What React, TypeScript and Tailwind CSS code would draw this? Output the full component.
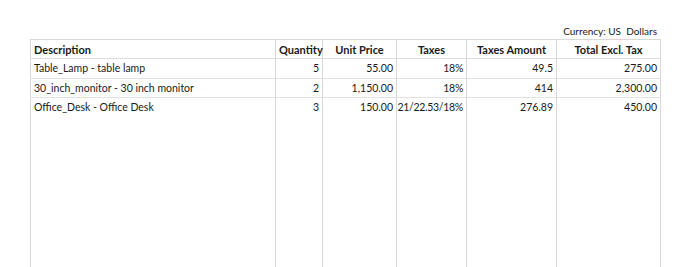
const rows = [
  { desc: "Table_Lamp - table lamp", qty: "5", price: "55.00", taxes: "18%", amount: "49.5", total: "275.00" },
  { desc: "30_inch_monitor - 30 inch monitor", qty: "2", price: "1,150.00", taxes: "18%", amount: "414", total: "2,300.00" },
  { desc: "Office_Desk - Office Desk", qty: "3", price: "150.00", taxes: "21/22.53/18%", amount: "276.89", total: "450.00" },
];

const App = () => {
  return (
    <div className="h-[267px] overflow-hidden bg-white pl-[30px] pt-[24px] text-[10.5px] text-[#1a1a1a] font-['Lato',sans-serif] whitespace-nowrap">
      <div className="w-[630px]">
        <div className="h-[15px] pr-[3px] text-right leading-[15px] text-[10px]">Currency: US&nbsp; Dollars</div>
        <table className="w-[630px] table-fixed border-collapse border border-[#d8d8d8]">
          <colgroup>
            <col className="w-[245px]" />
            <col className="w-[47px]" />
            <col className="w-[74px]" />
            <col className="w-[70px]" />
            <col className="w-[90px]" />
            <col className="w-[104px]" />
          </colgroup>
          <thead>
            <tr className="h-[19px] border-b border-[#dedede] text-[11px] font-bold leading-none">
              <th className="border-r border-[#d8d8d8] px-[3px] text-left">Description</th>
              <th className="border-r border-[#d8d8d8] px-[3px] text-right">Quantity</th>
              <th className="border-r border-[#d8d8d8] px-[3px] text-center">Unit Price</th>
              <th className="border-r border-[#d8d8d8] px-[3px] text-center">Taxes</th>
              <th className="border-r border-[#d8d8d8] px-[3px] text-center">Taxes Amount</th>
              <th className="px-[3px] text-center">Total Excl. Tax</th>
            </tr>
          </thead>
          <tbody>
            {rows.map((r, i) => (
              <tr key={i} className={`h-[19.5px] leading-none ${i < rows.length - 1 ? "border-b border-[#e2e2e2]" : ""}`}>
                <td className="border-r border-[#d8d8d8] px-[3px] text-left">{r.desc}</td>
                <td className="border-r border-[#d8d8d8] px-[3px] text-right">{r.qty}</td>
                <td className="border-r border-[#d8d8d8] px-[3px] text-right">{r.price}</td>
                <td className="border-r border-[#d8d8d8] pl-0 pr-[3px] text-right tracking-[-0.3px]">{r.taxes}</td>
                <td className="border-r border-[#d8d8d8] px-[3px] text-right">{r.amount}</td>
                <td className="px-[3px] text-right">{r.total}</td>
              </tr>
            ))}
            <tr className="h-[200px]">
              <td className="border-r border-[#d8d8d8]"></td>
              <td className="border-r border-[#d8d8d8]"></td>
              <td className="border-r border-[#d8d8d8]"></td>
              <td className="border-r border-[#d8d8d8]"></td>
              <td className="border-r border-[#d8d8d8]"></td>
              <td></td>
            </tr>
          </tbody>
        </table>
      </div>
    </div>
  );
};

export default App;
